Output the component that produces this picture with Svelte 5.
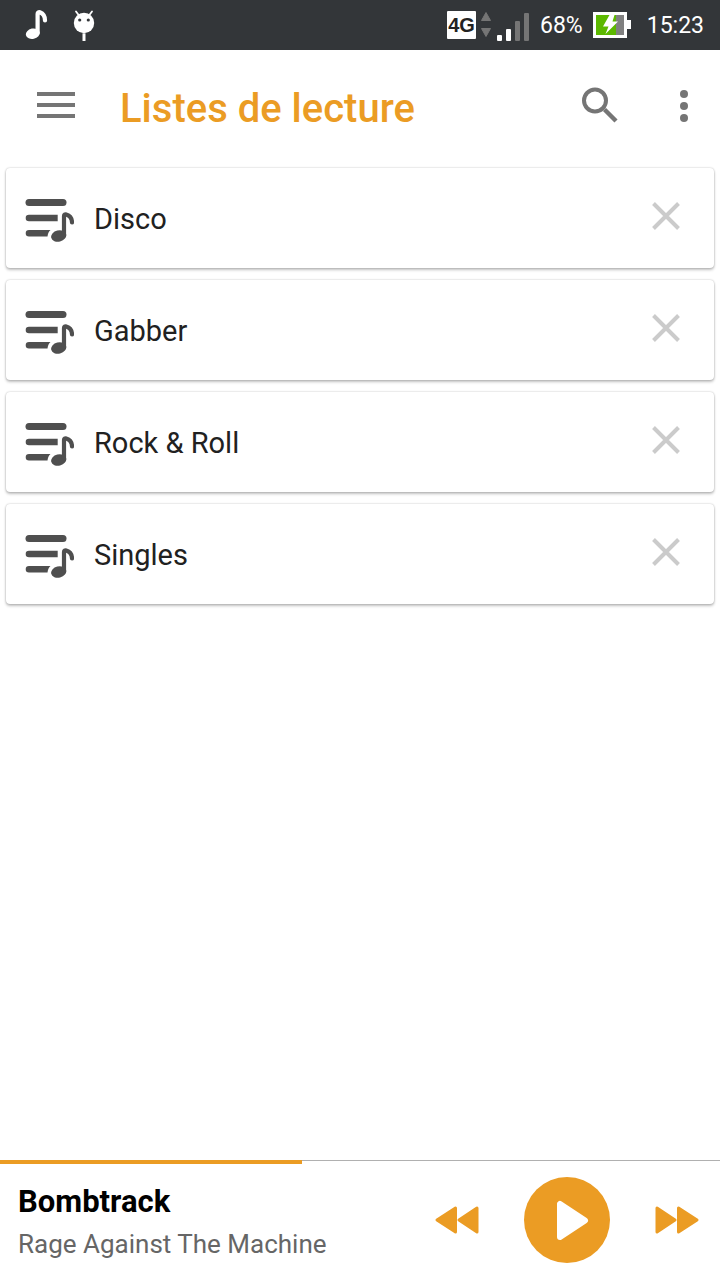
<script>
  const playlists = ['Disco', 'Gabber', 'Rock & Roll', 'Singles'];
  const track = { title: 'Bombtrack', artist: 'Rage Against The Machine', progress: 42 };
</script>

<div class="screen">
  <div class="status">
    <div class="notices">
      <svg width="24" height="30" viewBox="0 0 24 30" aria-hidden="true">
        <ellipse cx="8.800" cy="23.700" rx="7" ry="5.200" transform="rotate(-12 8.800 23.700)" fill="#fff" />
        <path d="M13.600 23V4c0-1.300 1-2 2.300-1.700C19 3.500 21 6.500 21 10.500" fill="none" stroke="#fff" stroke-width="4.200" stroke-linecap="round" stroke-linejoin="round" />
      </svg>
      <svg width="24" height="32" viewBox="0 0 24 32" aria-hidden="true">
        <path d="M4 2.500l3 4M20 2.500l-3 4" stroke="#fff" stroke-width="1.800" stroke-linecap="round" />
        <circle cx="12" cy="14" r="10.200" fill="#fff" />
        <circle cx="7.700" cy="11" r="1.600" fill="#333639" />
        <circle cx="16.300" cy="11" r="1.600" fill="#333639" />
        <path d="M10.500 24.300h3v7.700h-3z" fill="#fff" />
      </svg>
    </div>
    <span class="network">4G</span>
    <svg class="traffic" width="12" height="28" viewBox="0 0 12 28" aria-hidden="true">
      <path d="M6 1.500l4.500 8h-9zM6 25.500l4.500-8h-9z" fill="#757575" stroke="#757575" stroke-linejoin="round" />
    </svg>
    <svg class="signal" width="34" height="30" viewBox="0 0 34 30" aria-hidden="true">
      <rect x="1" y="23" width="5" height="6" rx="1" fill="#fff" />
      <rect x="10" y="17" width="5" height="12" rx="1" fill="#fff" />
      <rect x="19" y="9" width="5" height="20" rx="1" fill="#757575" />
      <rect x="28" y="1" width="5" height="28" rx="1" fill="#757575" />
    </svg>
    <span class="value">68%</span>
    <svg class="battery" width="38" height="26" viewBox="0 0 38 26" aria-hidden="true">
      <path d="M0 0h34v8h4v9h-4v9H0z" fill="#fff" />
      <path d="M3 3h20v20H3z" fill="#5cb800" />
      <path d="M23 3h8v20h-8z" fill="#808080" />
      <path d="M16.500 3h5l-2 6.500h5.500L12.500 22l3-7.500H10z" fill="#fff" />
    </svg>
    <span class="value">15:23</span>
  </div>

  <header>
    <button class="menu" aria-label="Menu">
      <svg width="38" height="26" viewBox="0 0 38 26">
        <path d="M0 2h38M0 13h38M0 24h38" stroke="#757575" stroke-width="4" />
      </svg>
    </button>
    <h1>Listes de lecture</h1>
    <button class="search" aria-label="Rechercher">
      <svg width="36" height="36" viewBox="0 0 36 36">
        <circle cx="13" cy="13.500" r="11" fill="none" stroke="#757575" stroke-width="4" />
        <path d="M22.500 22.500L34 34" stroke="#757575" stroke-width="4.400" />
      </svg>
    </button>
    <button class="more" aria-label="Plus d’options">
      <svg width="8" height="32" viewBox="0 0 8 32" fill="#757575">
        <circle cx="4" cy="4" r="4" /><circle cx="4" cy="16" r="4" /><circle cx="4" cy="28" r="4" />
      </svg>
    </button>
  </header>

  <main>
    <ul>
      {#each playlists as name}
        <li>
          <svg width="50" height="44" viewBox="0 0 50 44" aria-hidden="true">
            <g fill="#4f4f4f">
              <rect x="1.500" y="1" width="41" height="7" rx="3.500" />
              <path d="M5 16.700H33.700v6.600H5a3.300 3.300 0 0 1 0-6.600z" />
              <path d="M5 32H26.500c-1.800 1.600-2.600 3.500-3 6.600H5a3.300 3.300 0 0 1 0-6.600z" />
              <ellipse cx="34.700" cy="38" rx="7.700" ry="5.700" transform="rotate(-14 34.700 38)" />
            </g>
            <path d="M40 37.500V18c0-1.500 1-2 2.300-1.500C46 17.700 48 20.500 48 24.500" fill="none" stroke="#4f4f4f" stroke-width="4.200" stroke-linecap="round" stroke-linejoin="round" />
          </svg>
          <span>{name}</span>
          <button aria-label={`Supprimer ${name}`}>
            <svg width="28" height="28" viewBox="0 0 28 28">
              <path d="M1.500 1.500l25 25M26.500 1.500l-25 25" stroke="#cbcbcb" stroke-width="4" />
            </svg>
          </button>
        </li>
      {/each}
    </ul>
  </main>

  <footer>
    <div class="progress" role="progressbar" aria-label="Progression" aria-valuenow={track.progress} aria-valuemin="0" aria-valuemax="100">
      <div class="elapsed" style="width: {track.progress}%"></div>
    </div>
    <div class="player">
      <div class="track">
        <strong>{track.title}</strong>
        <span>{track.artist}</span>
      </div>
      <div class="controls">
        <button aria-label="Précédent">
          <svg width="44" height="28" viewBox="0 0 44 28" fill="#eb9c24" stroke="#eb9c24" stroke-width="3" stroke-linejoin="round">
            <path d="M2 14L20.500 2v24zM24 14L42 2v24z" />
          </svg>
        </button>
        <button aria-label="Lecture">
          <svg width="86" height="86" viewBox="0 0 86 86">
            <circle cx="43" cy="43" r="43" fill="#eb9c24" />
            <path d="M36 27v33l25-16.500z" fill="#fff" stroke="#fff" stroke-width="6" stroke-linejoin="round" />
          </svg>
        </button>
        <button aria-label="Suivant">
          <svg width="44" height="28" viewBox="0 0 44 28" fill="#eb9c24" stroke="#eb9c24" stroke-width="3" stroke-linejoin="round">
            <path d="M42 14L23.500 2v24zM20 14L2 2v24z" />
          </svg>
        </button>
      </div>
    </div>
  </footer>
</div>

<style>
  :global(body) {
    margin: 0;
    background: #fff;
  }
  .screen {
    display: flex;
    flex-direction: column;
    min-height: 100vh;
    background: #fff;
    color: #212121;
    font-family: Roboto, sans-serif;
  }
  svg {
    display: block;
    flex: none;
  }
  button {
    display: block;
    padding: 0;
    border: 0;
    background: none;
    cursor: pointer;
  }
  .status {
    display: flex;
    align-items: center;
    height: 50px;
    padding: 0 16px 0 24px;
    background: #333639;
    color: #fff;
    font-size: 23px;
    line-height: 28px;
  }
  .value {
    padding-top: 2px;
  }
  .notices {
    display: flex;
    flex: 1;
    align-items: center;
    gap: 24px;
  }
  .network {
    width: 29px;
    border-radius: 1px;
    background: #fff;
    color: #222;
    font-family: "Liberation Sans", sans-serif;
    font-size: 20px;
    font-weight: 700;
    text-align: center;
  }
  .traffic {
    margin-left: 4px;
  }
  .signal {
    margin: 4px 10px 0 4px;
  }
  .battery {
    margin: 0 16px 0 10px;
  }
  header {
    display: flex;
    align-items: center;
    height: 110px;
    padding: 0 32px 0 37px;
  }
  h1 {
    flex: 1;
    margin: 8px 0 0 45px;
    color: #eb9c24;
    font-size: 40px;
    font-weight: 500;
    line-height: 48px;
  }
  .search {
    margin-right: 62px;
  }
  .more {
    padding-top: 2px;
  }
  main {
    flex: 1;
    padding: 8px 6px;
  }
  ul {
    display: grid;
    gap: 12px;
    margin: 0;
    padding: 0;
    list-style: none;
  }
  li {
    display: flex;
    align-items: center;
    gap: 20px;
    height: 100px;
    padding: 0 34px 0 18px;
    border-radius: 4px;
    background: #fff;
    box-shadow: 0 0 2px rgba(0, 0, 0, 0.25), 0 2px 3px rgba(0, 0, 0, 0.24);
    box-sizing: border-box;
    font-size: 29px;
    line-height: 36px;
  }
  li > svg {
    margin-top: 4px;
  }
  li > span {
    flex: 1;
    padding-top: 2px;
  }
  li > button {
    margin-bottom: 4px;
  }
  .progress {
    height: 4px;
    border-top: 1px solid #b0b0b0;
    box-sizing: border-box;
  }
  .elapsed {
    height: 4px;
    margin-top: -1px;
    background: #eb9c24;
  }
  .player {
    display: flex;
    align-items: center;
    justify-content: space-between;
    height: 116px;
    padding: 0 21px 0 18px;
    box-sizing: border-box;
  }
  .track {
    display: flex;
    flex-direction: column;
    gap: 8px;
    padding-top: 2px;
    line-height: 34px;
  }
  .track strong {
    color: #000;
    font-size: 31px;
  }
  .track span {
    color: #666;
    font-size: 26px;
  }
  .controls {
    display: flex;
    align-items: center;
    gap: 45px;
    padding-bottom: 4px;
  }
</style>
